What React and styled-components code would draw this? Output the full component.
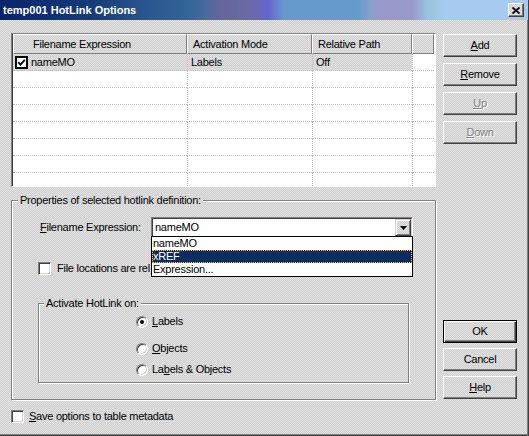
import React from 'react';
import styled, { createGlobalStyle, css } from 'styled-components';

const GlobalStyle = createGlobalStyle`
  html, body {
    margin: 0;
    padding: 0;
    background: #d8d8d8;
  }
  body {
    font-family: 'Liberation Sans', Arial, sans-serif;
  }
`;

// classic 50% dither of the 3D face colour
const dither = css`
  background-color: #d8d8d8;
  background-image: repeating-conic-gradient(#d0d0d0 0 25%, #e0e0e0 0 50%);
  background-size: 2px 2px;
  background-attachment: fixed;
`;

const Window = styled.div`
  width: 529px;
  height: 436px;
  box-sizing: border-box;
  display: flex;
  flex-direction: column;
  overflow: hidden;
  ${dither}
  border-right: 1px solid #404040;
  border-bottom: 1px solid #404040;
  box-shadow: inset -1px -1px 0 #808080;
  font-size: 11px;
  line-height: 13px;
  letter-spacing: -0.25px;
  color: #000;
`;

const TitleBar = styled.div`
  flex: none;
  height: 20px;
  box-sizing: border-box;
  padding: 0 4px 0 3px;
  display: flex;
  align-items: center;
  justify-content: space-between;
  background: linear-gradient(
    90deg,
    #0a246a 0,
    #163a78 90px,
    #2a5890 150px,
    #336699 190px,
    #4a6a9c 205px,
    #666699 222px,
    #6a6aa8 250px,
    #6666cc 268px,
    #6699cc 284px,
    #6699cc 358px,
    #8aa0cc 370px,
    #9999cc 380px,
    #9999cc 412px,
    #99c4dc 428px,
    #a6caf0 445px,
    #a6caf0 100%
  );
  color: #fff;
  font-weight: bold;
  letter-spacing: 0;
`;

const CloseButton = styled.button`
  width: 16px;
  height: 14px;
  padding: 0;
  box-sizing: border-box;
  display: flex;
  align-items: center;
  justify-content: center;
  ${dither}
  border: 1px solid;
  border-color: #fff #404040 #404040 #fff;
  box-shadow: inset -1px -1px 0 #808080;
`;

const Body = styled.div`
  display: grid;
  grid-template-columns: 425px 74px;
  column-gap: 7px;
  align-items: start;
  padding-left: 11px;
`;

const Main = styled.div`
  display: flex;
  flex-direction: column;
  padding-top: 13px;
`;

const Side = styled.div`
  display: flex;
  flex-direction: column;
  padding-top: 14px;
`;

const ButtonStack = styled.div`
  display: flex;
  flex-direction: column;
  gap: ${p => p.$gap}px;

  & + & {
    margin-top: 176px;
  }
`;

const Button = styled.button`
  width: 74px;
  height: 23px;
  box-sizing: border-box;
  padding: 0;
  font: inherit;
  letter-spacing: inherit;
  color: ${p => (p.disabled ? '#808080' : '#000')};
  text-shadow: ${p => (p.disabled ? '1px 1px 0 #fff' : 'none')};
  ${dither}
  border: 1px solid;
  border-color: ${p => (p.$default ? '#000' : '#fff #404040 #404040 #fff')};
  box-shadow: ${p =>
    p.$default
      ? 'inset 1px 1px 0 #fff, inset -1px -1px 0 #404040, inset -2px -2px 0 #808080'
      : 'inset -1px -1px 0 #808080'};
`;

const Key = styled.span`
  text-decoration: underline;
  text-underline-offset: 1px;
`;

/* ---------- list view ---------- */

const columns = '174px 125px 100px 22px';

const TableFrame = styled.div`
  height: 154px;
  box-sizing: border-box;
  border: 1px solid;
  border-color: #808080 #fff #fff #808080;
  overflow: hidden;
`;

const TableInner = styled.div`
  height: 100%;
  border-left: 1px solid #404040;
  background: #fff;
  display: flex;
  flex-direction: column;
`;

const HeaderRow = styled.div`
  flex: none;
  display: grid;
  grid-template-columns: ${columns};
  height: 20px;
`;

const HeaderCell = styled.div`
  box-sizing: border-box;
  ${dither}
  border: 1px solid;
  border-color: #fff #808080 #808080 #fff;
  padding-left: ${p => (p.$first ? 19 : 5)}px;
  display: flex;
  align-items: center;
  white-space: nowrap;
  overflow: hidden;
`;

const Row = styled.div`
  flex: none;
  display: grid;
  grid-template-columns: ${columns};
  height: 17px;
`;

const Cell = styled.div`
  box-sizing: border-box;
  border-bottom: 1px dotted #c0c0c0;
  border-left: ${p => (p.$first ? 'none' : '1px dotted #c0c0c0')};
  padding-left: ${p => (p.$first ? 2 : 3)}px;
  display: flex;
  align-items: center;
  gap: 3px;
  white-space: nowrap;
  ${p => (p.$selected ? dither : 'background: #fff;')}
`;

const ListCheck = styled.span`
  width: 13px;
  height: 13px;
  box-sizing: border-box;
  border: 2px solid #000;
  background: #fff;
  display: flex;
  align-items: center;
  justify-content: center;
`;

/* ---------- group boxes ---------- */

const Group = styled.fieldset`
  margin: ${p => p.$top}px 0 0;
  min-width: 0;
  width: ${p => p.$width}px;
  box-sizing: border-box;
  border: 1px solid #808080;
  box-shadow: inset 1px 1px 0 #fff, 1px 1px 0 #fff;
  padding: ${p => p.$pad};
`;

const Legend = styled.legend`
  margin: 0;
  padding: 0 2px;
  line-height: 13px;
  ${dither}
`;

const GroupContent = styled.div`
  display: flex;
  flex-direction: column;
  margin-left: 20px;
`;

const FieldRow = styled.div`
  display: flex;
  align-items: center;
  margin-top: 10px;
  height: 21px;
`;

const FieldLabel = styled.label`
  width: 111px;
  padding-left: 2px;
`;

const Combo = styled.div`
  position: relative;
  width: 262px;
  height: 21px;
  box-sizing: border-box;
  border: 1px solid;
  border-color: #808080 #fff #fff #808080;
`;

const ComboInner = styled.div`
  height: 100%;
  box-sizing: border-box;
  border: 1px solid;
  border-color: #404040 #d4d0c8 #d4d0c8 #404040;
  background: #fff;
  display: flex;
  align-items: stretch;
`;

const ComboText = styled.span`
  flex: 1;
  padding-left: 2px;
  display: flex;
  align-items: center;
`;

const ArrowButton = styled.span`
  width: 16px;
  box-sizing: border-box;
  ${dither}
  border: 1px solid;
  border-color: #d4d0c8 #404040 #404040 #d4d0c8;
  box-shadow: inset 1px 1px 0 #fff, inset -1px -1px 0 #808080;
  display: flex;
  align-items: center;
  justify-content: center;
`;

const DropList = styled.ul`
  position: absolute;
  top: 100%;
  left: -1px;
  z-index: 2;
  width: 262px;
  box-sizing: border-box;
  margin: -1px 0 0;
  padding: 0;
  list-style: none;
  border: 1px solid #000;
  background: #fff;
`;

const DropItem = styled.li`
  height: 13px;
  line-height: 13px;
  padding-left: 1px;
  background: ${p => (p.$active ? '#0a2e62' : '#fff')};
  color: ${p => (p.$active ? '#fff' : '#000')};
  outline: ${p => (p.$active ? '1px dotted #ffcc88' : 'none')};
  outline-offset: -1px;
`;

const CheckRow = styled.div`
  display: flex;
  align-items: center;
  gap: ${p => p.$gap}px;
  margin-top: ${p => p.$top}px;
  height: 13px;
  white-space: nowrap;
`;

// the open drop-down list hides the rest of this caption
const HiddenTailLabel = styled.span`
  width: 93px;
  overflow: hidden;
`;

const CheckBox = styled.span`
  flex: none;
  width: 13px;
  height: 13px;
  box-sizing: border-box;
  border: 1px solid;
  border-color: #808080 #fff #fff #808080;
  box-shadow: inset 1px 1px 0 #404040, inset -1px -1px 0 #d4d0c8;
  background: #fff;
`;

const RadioList = styled.div`
  display: flex;
  flex-direction: column;
  margin-left: 92px;
  padding-top: 5px;
`;

const RadioRow = styled.div`
  display: flex;
  align-items: center;
  gap: 4px;
  height: 13px;
  margin-top: ${p => p.$top}px;
`;

const Radio = styled.span`
  position: relative;
  flex: none;
  width: 12px;
  height: 12px;
  box-sizing: border-box;
  border-radius: 50%;
  border: 1px solid;
  border-color: #808080 #fff #fff #808080;
  box-shadow: inset 1px 1px 0 #404040, inset -1px -1px 0 #d4d0c8;
  background: #fff;

  &::after {
    content: '';
    display: ${p => (p.$checked ? 'block' : 'none')};
    position: absolute;
    left: 3px;
    top: 3px;
    width: 4px;
    height: 4px;
    border-radius: 50%;
    background: #000;
  }
`;

const rows = [
  { name: 'nameMO', mode: 'Labels', rel: 'Off', checked: true, selected: true },
  {}, {}, {}, {}, {}, {}, {},
];

export default function App() {
  return (
    <>
      <GlobalStyle />
      <Window>
        <TitleBar>
          <span>temp001 HotLink Options</span>
          <CloseButton aria-label="Close">
            <svg width="8" height="7" viewBox="0 0 8 7">
              <path d="M0.5 0.5L7.5 6.5M7.5 0.5L0.5 6.5" stroke="#000" strokeWidth="1.7" fill="none" />
            </svg>
          </CloseButton>
        </TitleBar>

        <Body>
          <Main>
            <TableFrame>
              <TableInner>
                <HeaderRow>
                  <HeaderCell $first>Filename Expression</HeaderCell>
                  <HeaderCell>Activation Mode</HeaderCell>
                  <HeaderCell>Relative Path</HeaderCell>
                  <HeaderCell />
                </HeaderRow>
                {rows.map((r, i) => (
                  <Row key={i}>
                    <Cell $first $selected={r.selected}>
                      {r.name && (
                        <ListCheck>
                          {r.checked && (
                            <svg width="9" height="9" viewBox="0 0 9 9">
                              <path d="M1.2 4.2L3.4 6.6L7.8 1.8" stroke="#000" strokeWidth="1.8" fill="none" />
                            </svg>
                          )}
                        </ListCheck>
                      )}
                      {r.name}
                    </Cell>
                    <Cell $selected={r.selected}>{r.mode}</Cell>
                    <Cell $selected={r.selected}>{r.rel}</Cell>
                    <Cell />
                  </Row>
                ))}
              </TableInner>
            </TableFrame>

            <Group $top={7} $width={425} $pad="0 22px 16px 6px">
              <Legend>Properties of selected hotlink definition:</Legend>
              <GroupContent>
                <FieldRow>
                  <FieldLabel>
                    <Key>F</Key>ilename Expression:
                  </FieldLabel>
                  <Combo>
                    <ComboInner>
                      <ComboText>nameMO</ComboText>
                      <ArrowButton>
                        <svg width="7" height="4" viewBox="0 0 7 4">
                          <path d="M0 0H7L3.5 4Z" fill="#000" />
                        </svg>
                      </ArrowButton>
                    </ComboInner>
                    <DropList>
                      <DropItem>nameMO</DropItem>
                      <DropItem $active>xREF</DropItem>
                      <DropItem>Expression...</DropItem>
                    </DropList>
                  </Combo>
                </FieldRow>

                <CheckRow $top={24} $gap={6}>
                  <CheckBox />
                  <HiddenTailLabel>File locations are relative to the table</HiddenTailLabel>
                </CheckRow>

                <Group $top={22} $width={371} $pad="0 0 6px 5px">
                  <Legend>Activate HotLink on:</Legend>
                  <RadioList>
                    <RadioRow $top={0}>
                      <Radio $checked />
                      <span><Key>L</Key>abels</span>
                    </RadioRow>
                    <RadioRow $top={14}>
                      <Radio />
                      <span><Key>O</Key>bjects</span>
                    </RadioRow>
                    <RadioRow $top={8}>
                      <Radio />
                      <span>La<Key>b</Key>els &amp; Objects</span>
                    </RadioRow>
                  </RadioList>
                </Group>
              </GroupContent>
            </Group>

            <CheckRow $top={10} $gap={5}>
              <CheckBox />
              <span><Key>S</Key>ave options to table metadata</span>
            </CheckRow>
          </Main>

          <Side>
            <ButtonStack $gap={6}>
              <Button><Key>A</Key>dd</Button>
              <Button><Key>R</Key>emove</Button>
              <Button disabled><Key>U</Key>p</Button>
              <Button disabled><Key>D</Key>own</Button>
            </ButtonStack>
            <ButtonStack $gap={5}>
              <Button $default>OK</Button>
              <Button>Cancel</Button>
              <Button><Key>H</Key>elp</Button>
            </ButtonStack>
          </Side>
        </Body>
      </Window>
    </>
  );
}
